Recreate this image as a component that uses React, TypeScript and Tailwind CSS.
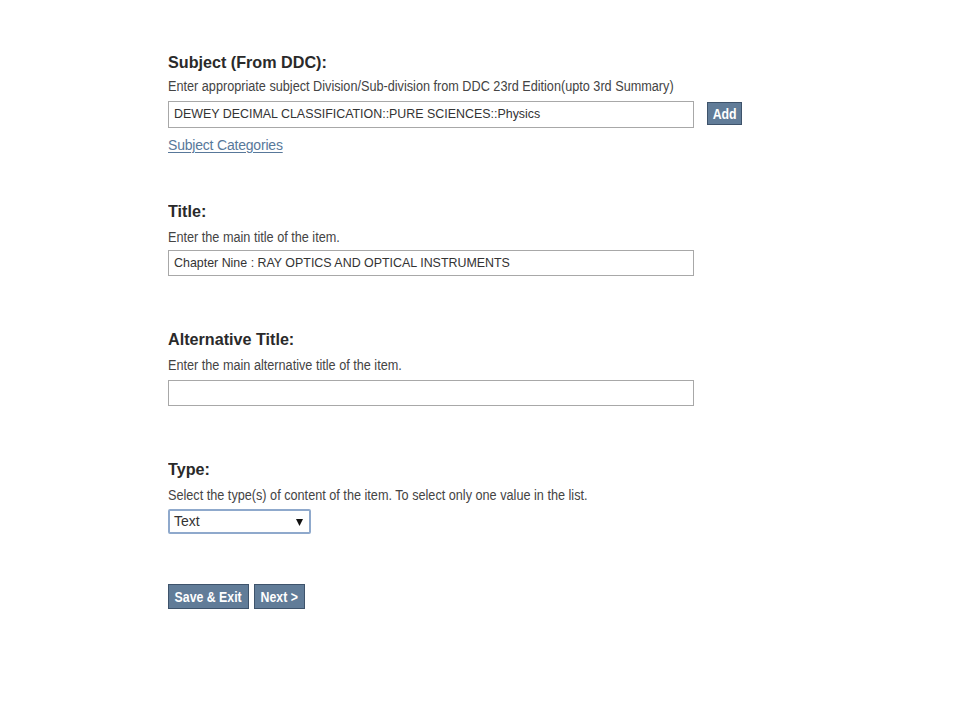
import React from "react";

const font = "font-['Liberation_Sans',Arial,sans-serif]";

function Heading({ children }: { children: React.ReactNode }) {
  return (
    <h2 className="text-[17px] leading-[22px] font-bold text-[#2a2a2a] whitespace-nowrap">
      <span className="inline-block origin-left scale-x-[0.95]">{children}</span>
    </h2>
  );
}

function Help({ children, mt = "mt-[6px]" }: { children: React.ReactNode; mt?: string }) {
  return (
    <p className={`${mt} text-[14px] leading-[16px] text-[#444] whitespace-nowrap`}>
      <span className="inline-block origin-left scale-x-[0.905]">{children}</span>
    </p>
  );
}

function TextBox({ value, h = "h-[26px]" }: { value?: string; h?: string }) {
  return (
    <div className={`w-[526px] ${h} border border-[#a8a8a8] bg-white flex items-center pl-[5px] text-[13.5px] text-[#333] whitespace-nowrap`}>
      {value ? <span className="inline-block origin-left scale-x-[0.92]">{value}</span> : null}
    </div>
  );
}

function Btn({ label, w }: { label: string; w: string }) {
  return (
    <button
      className={`${w} h-[25px] bg-[#617c98] border border-[#3e536b] text-white font-bold flex items-center justify-center`}
    >
      <span className="inline-block text-[14px] leading-none scale-x-[0.88]">{label}</span>
    </button>
  );
}

export default function App() {
  return (
    <div className={`${font} w-[960px] h-[720px] bg-white pl-[168px] pt-[52px]`}>
      <section>
        <Heading>Subject (From DDC):</Heading>
        <Help mt="mt-[4px]">Enter appropriate subject Division/Sub-division from DDC 23rd Edition(upto 3rd Summary)</Help>
        <div className="mt-[7px] flex items-start gap-[13px]">
          <TextBox value="DEWEY DECIMAL CLASSIFICATION::PURE SCIENCES::Physics" h="h-[27px]" />
          <button className="mt-px w-[35px] h-[23px] bg-[#617c98] border border-[#3e536b] text-white font-bold flex items-center justify-center">
            <span className="inline-block text-[14px] leading-none scale-x-[0.88]">Add</span>
          </button>
        </div>
        <a href="#" className="mt-[9px] block w-fit text-[14px] leading-[16px] text-[#58789a] underline underline-offset-2 tracking-[-0.2px]">
          Subject Categories
        </a>
      </section>

      <section className="mt-[48px]">
        <Heading>Title:</Heading>
        <Help>Enter the main title of the item.</Help>
        <div className="mt-[5px]">
          <TextBox value="Chapter Nine : RAY OPTICS AND OPTICAL INSTRUMENTS" />
        </div>
      </section>

      <section className="mt-[53px]">
        <Heading>Alternative Title:</Heading>
        <Help>Enter the main alternative title of the item.</Help>
        <div className="mt-[7px]">
          <TextBox />
        </div>
      </section>

      <section className="mt-[53px]">
        <Heading>Type:</Heading>
        <Help>Select the type(s) of content of the item. To select only one value in the list.</Help>
        <div className="mt-[6px] w-[143px] h-[25px] rounded-[2px] border-2 border-[#8fa9cc] bg-white flex items-center justify-between pl-[4px] pr-[6px]">
          <span className="text-[14px] text-[#333]">Text</span>
          <svg width="7" height="7" viewBox="0 0 7 7" className="mt-[1px]">
            <path d="M0 0 H7 L3.5 7 Z" fill="#111" />
          </svg>
        </div>
      </section>

      <div className="mt-[50px] flex gap-[5px]">
        <Btn label="Save & Exit" w="w-[81px]" />
        <Btn label="Next >" w="w-[51px]" />
      </div>
    </div>
  );
}
